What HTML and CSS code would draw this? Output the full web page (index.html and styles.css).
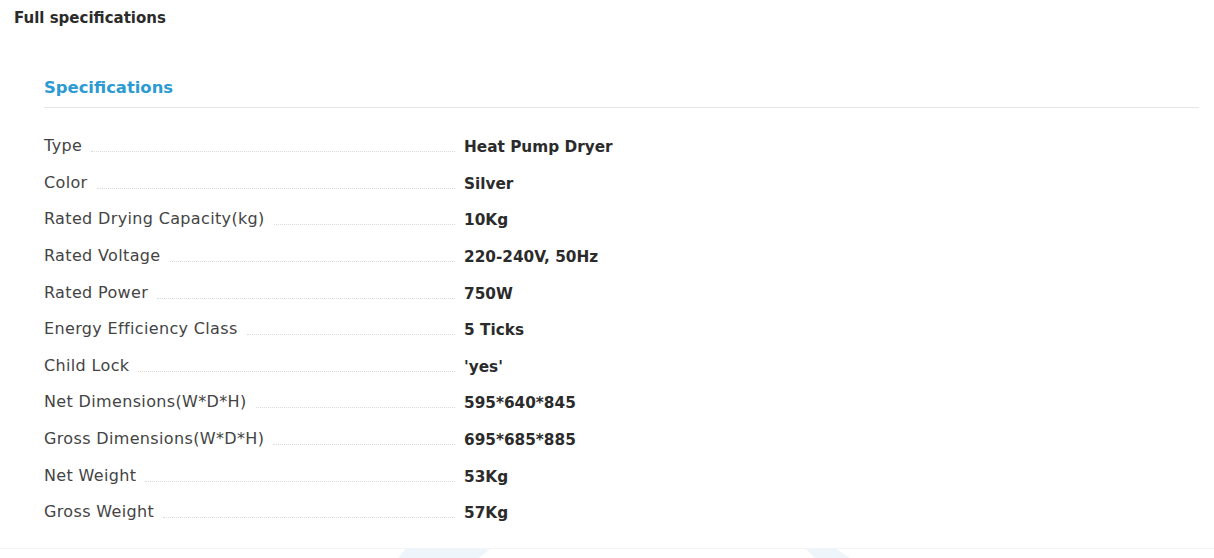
FILE: index.html
```html
<!DOCTYPE html>
<html lang="en">
<head>
<meta charset="utf-8">
<title>Full specifications</title>
<link rel="stylesheet" href="styles.css">
</head>
<body>
<div class="page">
  <h2 class="page-title">Full specifications</h2>
  <section class="specs">
    <h3 class="specs-title">Specifications</h3>
    <ul class="spec-list">
      <li class="spec-row"><div class="spec-key"><span class="spec-label">Type</span><span class="spec-dots"></span></div><span class="spec-value">Heat Pump Dryer</span></li>
      <li class="spec-row"><div class="spec-key"><span class="spec-label">Color</span><span class="spec-dots"></span></div><span class="spec-value">Silver</span></li>
      <li class="spec-row"><div class="spec-key"><span class="spec-label">Rated Drying Capacity(kg)</span><span class="spec-dots"></span></div><span class="spec-value">10Kg</span></li>
      <li class="spec-row"><div class="spec-key"><span class="spec-label">Rated Voltage</span><span class="spec-dots"></span></div><span class="spec-value">220-240V, 50Hz</span></li>
      <li class="spec-row"><div class="spec-key"><span class="spec-label">Rated Power</span><span class="spec-dots"></span></div><span class="spec-value">750W</span></li>
      <li class="spec-row"><div class="spec-key"><span class="spec-label">Energy Efficiency Class</span><span class="spec-dots"></span></div><span class="spec-value">5 Ticks</span></li>
      <li class="spec-row"><div class="spec-key"><span class="spec-label">Child Lock</span><span class="spec-dots"></span></div><span class="spec-value">'yes'</span></li>
      <li class="spec-row"><div class="spec-key"><span class="spec-label">Net Dimensions(W*D*H)</span><span class="spec-dots"></span></div><span class="spec-value">595*640*845</span></li>
      <li class="spec-row"><div class="spec-key"><span class="spec-label">Gross Dimensions(W*D*H)</span><span class="spec-dots"></span></div><span class="spec-value">695*685*885</span></li>
      <li class="spec-row"><div class="spec-key"><span class="spec-label">Net Weight</span><span class="spec-dots"></span></div><span class="spec-value">53Kg</span></li>
      <li class="spec-row"><div class="spec-key"><span class="spec-label">Gross Weight</span><span class="spec-dots"></span></div><span class="spec-value">57Kg</span></li>
    </ul>
  </section>
  <div class="footer-strip">
    <span class="shape shape-a"></span>
    <span class="shape shape-b"></span>
  </div>
</div>
</body>
</html>
```

FILE: styles.css
```css
html, body {
  margin: 0;
  padding: 0;
  background: #ffffff;
}

body {
  font-family: "DejaVu Sans", "Open Sans", sans-serif;
  color: #333333;
  overflow: hidden;
}

.page {
  width: 1214px;
  height: 558px;
  display: flex;
  flex-direction: column;
}

.page-title {
  margin: 0;
  padding: 8px 14px 0;
  height: 22px;
  font-size: 15px;
  line-height: 20px;
  font-weight: 700;
  color: #2b2b2b;
}

.specs {
  padding: 0 15px 0 44px;
  margin-top: 45px;
}

.specs-title {
  margin: 0;
  font-size: 16.4px;
  line-height: 26px;
  font-weight: 700;
  color: #2c9ad3;
  padding-bottom: 6px;
  border-bottom: 1px solid #e6e6e6;
}

.spec-list {
  list-style: none;
  margin: 20px 0 0;
  padding: 0;
}

.spec-row {
  display: grid;
  grid-template-columns: 411px auto;
  column-gap: 9px;
  align-items: center;
  height: 36.6px;
}

.spec-key {
  display: flex;
  align-items: flex-end;
}

.spec-label {
  flex: none;
  font-size: 16px;
  letter-spacing: 0.35px;
  line-height: 20px;
  color: #444444;
}

.spec-dots {
  flex: 1;
  height: 0;
  margin: 0 0 4px 9px;
  border-bottom: 1px dotted #d9d9d9;
}

.spec-value {
  font-size: 15.3px;
  line-height: 20px;
  font-weight: 700;
  color: #2b2b2b;
  padding-top: 2px;
}

.footer-strip {
  margin-top: auto;
  height: 9px;
  border-top: 1px solid #f3f4f5;
  display: flex;
}

.shape {
  display: block;
  height: 9px;
  background: #eef6fb;
}

.shape-a {
  margin-left: 398px;
  width: 92px;
  clip-path: polygon(8% 0, 100% 0, 88% 100%, 0 100%);
}

.shape-b {
  margin-left: 316px;
  width: 44px;
  clip-path: polygon(0 0, 70% 0, 100% 100%, 20% 100%);
}
```
